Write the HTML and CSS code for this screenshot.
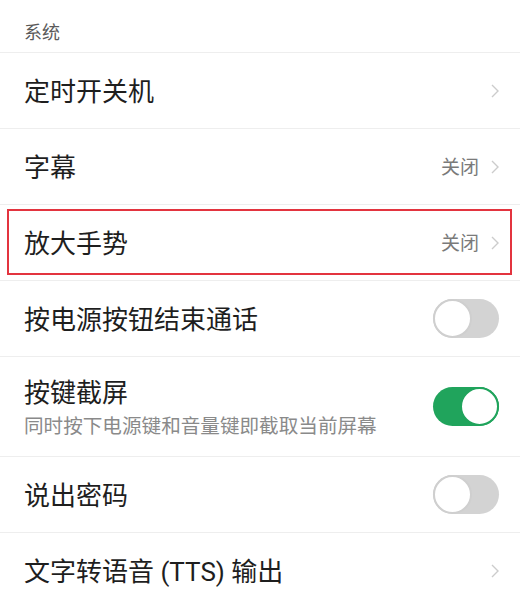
FILE: index.html
```html
<!DOCTYPE html>
<html lang="zh-CN">
<head>
<meta charset="utf-8">
<link rel="stylesheet" href="styles.css">
</head>
<body>
<div class="page">
  <div class="section-title">系统</div>
  <div class="row">
    <div class="label">定时开关机</div>
    <div class="trail"><svg class="chev" viewBox="0 0 8 14" width="8" height="14"><path d="M1 1 L7 7 L1 13" fill="none" stroke="#cccccc" stroke-width="1.4"/></svg></div>
  </div>
  <div class="row">
    <div class="label">字幕</div>
    <div class="trail"><span class="value">关闭</span><svg class="chev" viewBox="0 0 8 14" width="8" height="14"><path d="M1 1 L7 7 L1 13" fill="none" stroke="#cccccc" stroke-width="1.4"/></svg></div>
  </div>
  <div class="row highlighted">
    <div class="label">放大手势</div>
    <div class="trail"><span class="value">关闭</span><svg class="chev" viewBox="0 0 8 14" width="8" height="14"><path d="M1 1 L7 7 L1 13" fill="none" stroke="#cccccc" stroke-width="1.4"/></svg></div>
    <div class="mark"></div>
  </div>
  <div class="row">
    <div class="label">按电源按钮结束通话</div>
    <div class="trail"><span class="switch"><span class="knob"></span></span></div>
  </div>
  <div class="row tall">
    <div class="texts">
      <div class="label">按键截屏</div>
      <div class="sub">同时按下电源键和音量键即截取当前屏幕</div>
    </div>
    <div class="trail"><span class="switch on"><span class="knob"></span></span></div>
  </div>
  <div class="row">
    <div class="label">说出密码</div>
    <div class="trail"><span class="switch"><span class="knob"></span></span></div>
  </div>
  <div class="row">
    <div class="label">文字转语音 (TTS) 输出</div>
    <div class="trail"><svg class="chev" viewBox="0 0 8 14" width="8" height="14"><path d="M1 1 L7 7 L1 13" fill="none" stroke="#cccccc" stroke-width="1.4"/></svg></div>
  </div>
</div>
</body>
</html>
```

FILE: styles.css
```css
html, body {
  margin: 0;
  padding: 0;
  background: #ffffff;
}
body {
  font-family: "Roboto", "Noto Sans CJK SC", sans-serif;
  color: #1e1e1e;
  width: 520px;
  height: 593px;
  overflow: hidden;
}
.page {
  display: flex;
  flex-direction: column;
}
.section-title {
  box-sizing: border-box;
  height: 53px;
  padding: 22px 0 0 24px;
  font-size: 18px;
  line-height: 22px;
  color: #5a5a5a;
  border-bottom: 1px solid #eeeeee;
}
.row {
  position: relative;
  box-sizing: border-box;
  height: 76px;
  flex: none;
  display: flex;
  align-items: center;
  justify-content: space-between;
  padding: 0 20px 0 24px;
  border-bottom: 1px solid #eeeeee;
}
.row.tall {
  height: 100px;
}
.label {
  font-size: 26px;
  line-height: 30px;
  padding-top: 3px;
  color: #1e1e1e;
}
.texts {
  display: flex;
  flex-direction: column;
  gap: 8px;
  padding-top: 2px;
}
.texts .label {
  padding-top: 0;
}
.sub {
  font-size: 19.6px;
  line-height: 22px;
  color: #8a8a8a;
}
.trail {
  display: flex;
  align-items: center;
  gap: 12px;
}
.value {
  font-size: 19px;
  line-height: 22px;
  padding-top: 2px;
  color: #7a7a7a;
}
.chev {
  display: block;
  margin-right: 1px;
}
.switch {
  position: relative;
  display: block;
  width: 66px;
  height: 39px;
  border-radius: 20px;
  background: #d3d3d3;
  margin-right: 1px;
}
.switch .knob {
  position: absolute;
  top: 0;
  left: 0;
  box-sizing: border-box;
  width: 39px;
  height: 39px;
  border-radius: 50%;
  background: #ffffff;
  border: 2px solid #cfcfcf;
}
.switch.on {
  background: #20a45c;
}
.switch.on .knob {
  left: auto;
  right: 0;
  border-color: #20a45c;
}
.mark {
  position: absolute;
  left: 7px;
  right: 8px;
  top: 4px;
  bottom: 5px;
  border: 2px solid #e3343f;
  pointer-events: none;
}
```
